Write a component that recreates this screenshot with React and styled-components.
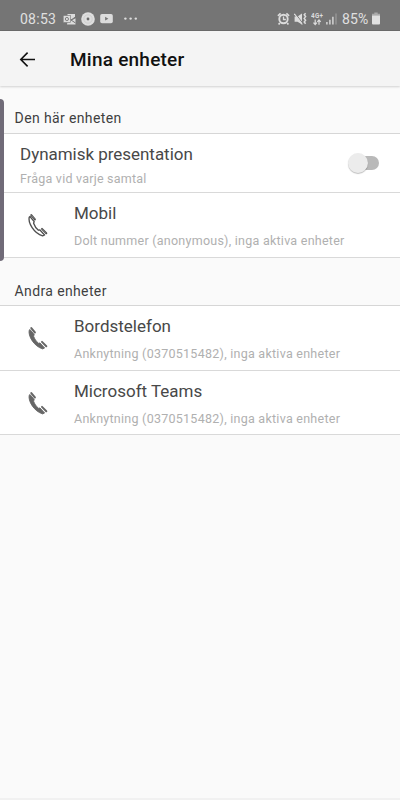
import React from "react";
import styled, { createGlobalStyle } from "styled-components";

const Global = createGlobalStyle`
  * { box-sizing: border-box; }
  body { margin: 0; background: #fafafa; font-family: Roboto, "Liberation Sans", sans-serif; }
`;

const Screen = styled.div`
  position: relative;
  width: 400px;
  height: 800px;
  overflow: hidden;
  background: #fafafa;
  border-bottom: 2px solid #f1f1f1;
`;

const StatusBar = styled.header`
  height: 31px;
  padding: 7px 20px 0 20px;
  display: flex;
  justify-content: space-between;
  background: #757575;
  color: #e0e0e0;
  border-bottom: 1px solid #6b6b6b;
`;

const StatusGroup = styled.div`
  display: flex;
  align-items: center;
  height: 24px;
`;

const StatusText = styled.span`
  font-size: 14px;
  line-height: 24px;
  width: ${(p) => p.$w}px;
  letter-spacing: ${(p) => p.$ls}px;
  white-space: nowrap;
`;

const StatusIcon = styled.svg`
  display: block;
  flex: none;
  width: ${(p) => p.$w}px;
  height: 14px;
  margin-left: ${(p) => p.$gap}px;
`;

const AppBar = styled.div`
  height: 55px;
  display: flex;
  align-items: center;
  padding: 1px 0 0 19px;
  background: #f4f4f4;
  box-shadow: 0 1px 2px rgba(0, 0, 0, 0.16);
`;

const BackButton = styled.button`
  width: 17px;
  height: 17px;
  padding: 0;
  border: 0;
  background: none;
  svg { display: block; }
`;

const Title = styled.h1`
  margin: 0 0 0 34px;
  font-size: 19px;
  font-weight: 500;
  letter-spacing: 0.23px;
  color: #111;
`;

const SectionTitle = styled.h2`
  margin: 0;
  height: 47px;
  padding: 0 0 ${(p) => p.$bottom}px 14.6px;
  display: flex;
  align-items: flex-end;
  font-size: 14px;
  line-height: 19px;
  font-weight: 400;
  letter-spacing: 0.37px;
  color: #3f3f3f;
`;

const List = styled.section`
  background: #fff;
  border-top: 1px solid #d6d6d6;
`;

const Row = styled.div`
  height: ${(p) => p.$h}px;
  display: flex;
  padding-left: ${(p) => (p.$plain ? 20 : 27)}px;
  border-bottom: 1px solid #d9d9d9;
`;

const RowIcon = styled.svg`
  flex: none;
  width: 22px;
  height: 24px;
  margin: 20px 25px 0 0;
`;

const RowText = styled.div`
  flex: 1;
  padding-top: 9px;
`;

const Name = styled.div`
  font-size: 17px;
  line-height: 22px;
  letter-spacing: ${(p) => p.$ls}px;
  color: #484848;
`;

const Detail = styled.div`
  margin-top: ${(p) => p.$gap}px;
  font-size: 12.5px;
  line-height: 16px;
  letter-spacing: ${(p) => p.$ls}px;
  color: #b0b0b0;
  white-space: nowrap;
`;

const Switch = styled.div`
  position: relative;
  width: 31px;
  height: 14px;
  margin: 22px 21px 0 0;
  border-radius: 7px;
  background: linear-gradient(90deg, transparent 10px, #b9b9b9 10px);
`;

const Thumb = styled.span`
  position: absolute;
  left: 0;
  top: -3px;
  width: 20px;
  height: 20px;
  border-radius: 50%;
  background: #ececec;
  box-shadow: 0 1px 1px rgba(0, 0, 0, 0.25);
`;

const EdgeHandle = styled.div`
  position: absolute;
  left: 0;
  top: 99px;
  width: 4px;
  height: 162px;
  border-radius: 0 4px 4px 0;
  background: #706b78;
`;

function Handset({ outline }) {
  return (
    <RowIcon viewBox="0 0 22 24">
      <path
        d="M2.2 4.2C.9 9.8 6.8 20.2 15.6 22.9L17.6 22L13 17L11.4 17.2C9.2 15.4 7.5 12.8 6.6 10.2L7.2 8.6L3 3.5Z"
        fill={outline ? "#fff" : "#666"}
        stroke={outline ? "#505050" : "#666"}
        strokeWidth={outline ? 1.35 : 0.9}
        strokeLinejoin="round"
      />
      <path
        d="M3.9 2.7L7.7 7.4M14.1 16.2L18.4 20.9"
        fill="none"
        stroke="#fff"
        strokeWidth="0.7"
      />
      <path
        d="M4.3 2.1L7.9 6.5M15 15.9L19.3 20.2"
        fill="none"
        stroke={outline ? "#505050" : "#666"}
        strokeWidth="2"
        strokeLinecap="round"
      />
      {outline && <path d="M4.6 2.4L7.6 6.1M15.4 16.3L19 19.8" stroke="#a0a0a0" strokeWidth="0.5" />}
    </RowIcon>
  );
}

function Device({ name, detail, detailLs, h = 65, outline }) {
  return (
    <Row $h={h}>
      <Handset outline={outline} />
      <RowText>
        <Name $ls={0}>{name}</Name>
        <Detail $gap={9} $ls={detailLs}>{detail}</Detail>
      </RowText>
    </Row>
  );
}

export default function App() {
  return (
    <Screen>
      <Global />
      <StatusBar>
        <StatusGroup>
          <StatusText $w={37} $ls={0.25}>08:53</StatusText>
          <StatusIcon $w={13} $gap={6} viewBox="0 0 13 14">
            <path d="M4.5 2H12v3.2L9 7.4 4.5 6z" fill="#dcdcdc" />
            <path d="M5 7l4 1.2 3.5-2v6.3H4z" fill="#dcdcdc" />
            <path d="M8 8l4.5 3M8 8l4.5-3" stroke="#757575" strokeWidth="1" />
            <rect x="0.2" y="3.4" width="7.4" height="7.2" fill="#dcdcdc" stroke="#757575" strokeWidth=".6" />
            <circle cx="3.9" cy="7" r="1.6" fill="none" stroke="#757575" strokeWidth=".9" />
          </StatusIcon>
          <StatusIcon $w={14} $gap={5} viewBox="0 0 14 14">
            <circle cx="7" cy="7" r="6.8" fill="#dedede" />
            <circle cx="7" cy="7" r="4.2" fill="none" stroke="#c4c4c4" strokeWidth=".6" />
            <circle cx="7" cy="7" r="1.4" fill="#6a6a6a" />
          </StatusIcon>
          <StatusIcon $w={13} $gap={5} viewBox="0 0 13 14">
            <rect x="0.2" y="2" width="12.6" height="9.2" rx="1.8" fill="#dcdcdc" />
            <path d="M5.1 4.8v3.8L8.4 6.7z" fill="#757575" />
          </StatusIcon>
          <StatusIcon $w={14} $gap={10.5} viewBox="0 0 14 14" fill="#dedede">
            <circle cx="1.4" cy="6.6" r="1.2" />
            <circle cx="6.6" cy="6.6" r="1.2" />
            <circle cx="11.8" cy="6.6" r="1.2" />
          </StatusIcon>
        </StatusGroup>
        <StatusGroup>
          <StatusIcon $w={13} $gap={0} viewBox="0 0 13 14" fill="none" stroke="#dcdcdc">
            <circle cx="6.5" cy="7" r="4.2" strokeWidth="1.9" />
            <path d="M6.5 4.5v3h2.4" strokeWidth="1.3" />
            <path d="M.9 3.8L3.6 1.3M12.1 3.8L9.4 1.3M2.8 11l-1.2 1.6M10.2 11l1.2 1.6" strokeWidth="1.7" />
          </StatusIcon>
          <StatusIcon $w={13} $gap={4} viewBox="0 0 13 14">
            <path d="M.6 4.4h2.9L8 1.5v11L3.5 9.7H.6z" fill="#dcdcdc" />
            <path d="M1.2 1.2l8.2 11" stroke="#757575" strokeWidth="1" />
            <path d="M.4 1.8l8 10.7" stroke="#dcdcdc" strokeWidth="1.1" />
            <path d="M11.6 1.2l-1.4 1.6 1.4 1.8-1.4 1.8 1.4 1.8-1.4 1.8 1.4 1.8" fill="none" stroke="#dcdcdc" strokeWidth="1.5" />
          </StatusIcon>
          <StatusIcon $w={13} $gap={4} viewBox="0 0 13 14">
            <text x="0" y="6" fontSize="6.3" fontWeight="700" fill="#dcdcdc" fontFamily="Roboto, sans-serif" textLength="12">4G+</text>
            <path d="M4.2 7.6v4.8M2.5 10.6l1.7 1.9L5.9 10.6M8 12.8V8M6.3 9.8L8 7.9l1.7 1.9" fill="none" stroke="#dcdcdc" strokeWidth="1.2" />
          </StatusIcon>
          <StatusIcon $w={11} $gap={2} viewBox="0 0 11 14">
            <path d="M.9 10v2.5M3.9 7.8v4.7M6.9 4.8v7.7" stroke="#d4d4d4" strokeWidth="1.5" />
            <path d="M10 1.5v11" stroke="#959595" strokeWidth="1.5" />
          </StatusIcon>
          <StatusIcon $w={5} $gap={0} />
          <StatusText $w={29} $ls={0.1}>85%</StatusText>
          <StatusIcon $w={8} $gap={1} viewBox="0 0 8 14">
            <path d="M2.3 .6h3.4v1.2H8v2H0v-2h2.3z" fill="#aaa" />
            <path d="M0 3.4h8v8.1q0 1-1 1H1q-1 0-1-1z" fill="#e0e0e0" />
          </StatusIcon>
        </StatusGroup>
      </StatusBar>
      <AppBar>
        <BackButton aria-label="Tillbaka">
          <svg width="17" height="17" viewBox="0 0 17 17" fill="none" stroke="#111" strokeWidth="1.6">
            <path d="M16 8.5H2M8.6 1.6L1.8 8.5l6.8 6.9" />
          </svg>
        </BackButton>
        <Title>Mina enheter</Title>
      </AppBar>
      <SectionTitle $bottom={5}>Den här enheten</SectionTitle>
      <List>
        <Row $plain $h={59}>
          <RowText>
            <Name $ls={-0.03}>Dynamisk presentation</Name>
            <Detail $gap={6} $ls={0.23}>Fråga vid varje samtal</Detail>
          </RowText>
          <Switch><Thumb /></Switch>
        </Row>
        <Device name="Mobil" detail="Dolt nummer (anonymous), inga aktiva enheter" detailLs={0.25} outline />
      </List>
      <SectionTitle $bottom={4}>Andra enheter</SectionTitle>
      <List>
        <Device name="Bordstelefon" detail="Anknytning (0370515482), inga aktiva enheter" detailLs={0.26} />
        <Device name="Microsoft Teams" detail="Anknytning (0370515482), inga aktiva enheter" detailLs={0.26} h={64} />
      </List>
      <EdgeHandle />
    </Screen>
  );
}
